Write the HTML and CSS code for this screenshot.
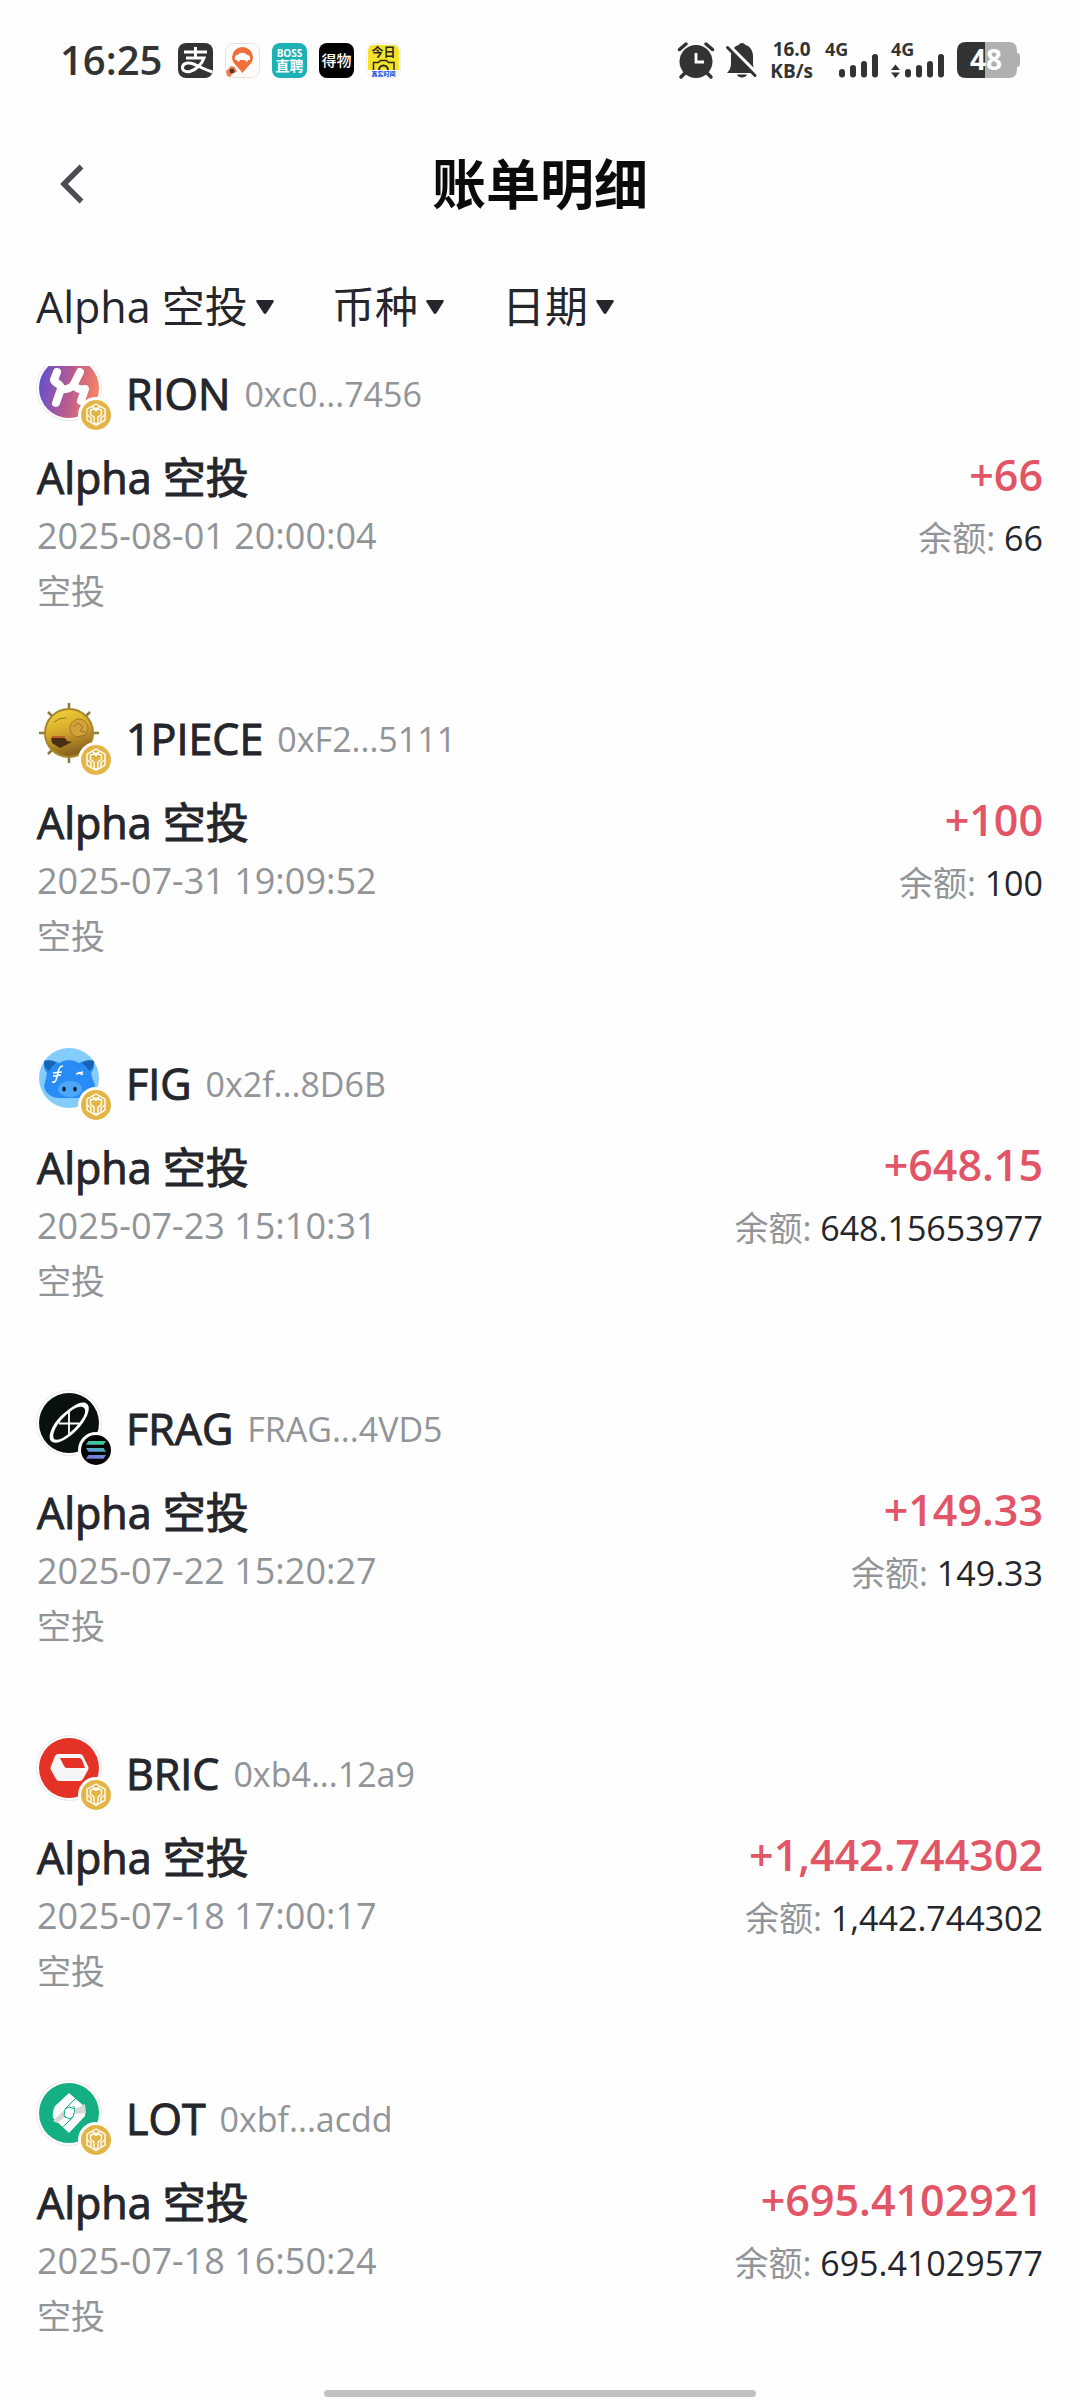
FILE: index.html
```html
<!DOCTYPE html>
<html lang="zh-CN">
<head>
<meta charset="utf-8">
<meta name="viewport" content="width=device-width, initial-scale=1">
<title>账单明细</title>
<link rel="stylesheet" href="styles.css">
</head>
<body>
<svg class="defs" width="0" height="0" aria-hidden="true">
  <defs>
    <linearGradient id="rion" x1="0" y1="0.4" x2="1" y2="0.6">
      <stop offset="0" stop-color="#6350cf"/><stop offset="0.5" stop-color="#b75a91"/><stop offset="1" stop-color="#fa8460"/>
    </linearGradient>
    <linearGradient id="gold" x1="0" y1="0" x2="0.3" y2="1">
      <stop offset="0" stop-color="#f4d93a"/><stop offset="0.5" stop-color="#d9aa2c"/><stop offset="1" stop-color="#8a6420"/>
    </linearGradient>
    <linearGradient id="sol" x1="0" y1="1" x2="0.3" y2="0">
      <stop offset="0" stop-color="#8a6be0"/><stop offset="0.5" stop-color="#5f9fd0"/><stop offset="1" stop-color="#3fc79a"/>
    </linearGradient>
    <symbol id="bnb" viewBox="0 0 36 36">
      <circle cx="18" cy="18" r="18" fill="#fff"/>
      <circle cx="18" cy="18" r="15" fill="#e3b545"/>
      <g fill="none" stroke="#fff" stroke-width="1.400" stroke-linejoin="round">
        <path d="M18 7l9 5.200v11L18 28.500l-9-5.300v-11z"/>
        <path d="M14 9.500l4 2.300 4-2.300M12.500 13l3.500-1 2 1.500 2-1.500 3.500 1v4.500L20 20v6l-2 1.200-2-1.200v-6l-3.500-2.500zM9 18l4 2.500v4.500M27 18l-4 2.500v4.500"/>
      </g>
    </symbol>
    <symbol id="solana" viewBox="0 0 36 36">
      <circle cx="18" cy="18" r="18" fill="#fff"/>
      <circle cx="18" cy="18" r="15" fill="#050507"/>
      <path d="M10.500 9h17.500l-2.500 3.800H8zM8 16h17.500l2.500 3.800H10.500zM10.500 23h17.500l-2.500 3.800H8z" fill="url(#sol)"/>
    </symbol>
  </defs>
</svg>

<header class="status">
  <div class="status-side">
    <time class="clock">16:25</time>
    <svg class="app" viewBox="0 0 35 35" aria-hidden="true"><rect width="35" height="35" rx="8" fill="#333"/>
      <path d="M6 9h23M17.500 4v11M8 15h18c-2 6-8 12-14 13.500-4 1-8-1-7.500-4.500.500-4 6-5 11-3 6 2.500 12 6 19 8" fill="none" stroke="#fff" stroke-width="3"/></svg>
    <svg class="app" viewBox="0 0 35 35" aria-hidden="true"><rect x="0.500" y="0.500" width="34" height="34" rx="8" fill="#fffdfb" stroke="#e6e2e0"/>
      <path d="M17.500 4a10.500 10.500 0 0 1 10.500 10.500c0 6-6 9-10.500 15.500C13 23.500 7 20.500 7 14.500A10.500 10.500 0 0 1 17.500 4z" fill="#f0703c"/>
      <path d="M10 14.500c0-2 1.500-2.500 3-2.500 1.500-3 7-3 9 0 2 0 3 1 3 3v2H10z" fill="#fff"/><circle cx="13.500" cy="17" r="1.500" fill="#fff"/><circle cx="21.500" cy="17" r="1.500" fill="#fff"/>
      <path d="M1 28l5-5 4 1 2 5-4 1-3 4-3-1z" fill="#ef8050"/><circle cx="7" cy="28" r="2.500" fill="#5c3326"/></svg>
    <svg class="app" viewBox="0 0 35 35" aria-hidden="true"><rect width="35" height="35" rx="8" fill="#1db0b4"/>
      <text class="t-boss" x="17.500" y="14" text-anchor="middle">BOSS</text><text class="t-zhipin" x="17.500" y="28" text-anchor="middle">直聘</text></svg>
    <svg class="app" viewBox="0 0 35 35" aria-hidden="true"><rect width="35" height="35" rx="8" fill="#000"/>
      <text class="t-dewu" x="17.500" y="23" text-anchor="middle">得物</text></svg>
    <svg class="app" viewBox="0 0 35 35" aria-hidden="true"><rect x="0.500" y="0.500" width="34" height="34" rx="8" fill="#fff" stroke="#eee"/><path d="M2 8q0-6 6-6h19q6 0 6 6v19H2z" fill="#f4e22c"/>
      <text class="t-jinri" x="17.500" y="14" text-anchor="middle">今日</text>
      <path d="M7.500 27v-7.500h5l2-2h6l2 2h5.500V27" fill="none" stroke="#2a2a20" stroke-width="1.500"/><path d="M13 27a4.500 4.500 0 0 1 9 0" fill="none" stroke="#2a2a20" stroke-width="2"/>
      <text class="t-zhenshi" x="17.500" y="33" text-anchor="middle">真实时间</text></svg>
  </div>
  <div class="status-side">
    <svg class="alarm" viewBox="0 0 36 36" aria-label="闹钟"><circle cx="18" cy="19.500" r="16.500" fill="#333"/><path d="M18 11v9h8" fill="none" stroke="#fff" stroke-width="2.800"/><path d="M1.500 7.500L8 2M34.500 7.500L28 2" stroke="#333" stroke-width="3.500" stroke-linecap="round"/><path d="M7 31l-4 4M29 31l4 4" stroke="#333" stroke-width="3.500" stroke-linecap="round"/></svg>
    <svg class="bell" viewBox="0 0 32 36" aria-label="静音"><path d="M1 31c3-3 4-6 4-10v-7C5 8 9 4 12.500 3a4 4 0 0 1 7 0C24 4 27 9 27 14v7c0 4 1 7 4 10zM11 32.500h10c-1 4-9 4-10 0z" fill="#333"/><path d="M3 3.500l28 28" stroke="#fff" stroke-width="3.500"/><path d="M1.500 5.500L29 33.500" stroke="#333" stroke-width="3" stroke-linecap="round"/></svg>
    <div class="speed"><span>16.0</span><span>KB/s</span></div>
    <svg class="signal" viewBox="0 0 54 36"><text class="t-net" x="0" y="14">4G</text><path d="M17 30v2.500M28 26v6.500M39 22v10.500M50 15v17.500" stroke="#333" stroke-width="6" stroke-linecap="round"/></svg>
    <svg class="signal" viewBox="0 0 54 36"><text class="t-net" x="0" y="14">4G</text><path d="M0 28l4.500-5.500L9 28zM0 30.500l4.500 5.500L9 30.500z" fill="#333"/><path d="M17 30v2.500M28 26v6.500M39 22v10.500M50 15v17.500" stroke="#333" stroke-width="6" stroke-linecap="round"/></svg>
    <svg class="battery" viewBox="0 0 63 36"><path d="M28 0h24q8 0 8 9v2q3 0 3 3v8q0 3-3 3v2q0 9-8 9H28z" fill="#b0b0b0"/><path d="M28 0H9Q0 0 0 9v18q0 9 9 9h19z" fill="#333"/><text class="t-batt" x="29" y="28" text-anchor="middle">48</text></svg>
  </div>
</header>

<nav class="topbar">
  <button class="back" type="button" aria-label="返回"><svg viewBox="0 0 24 40"><path d="M21.500 2.500L4 20l17.500 17.500" fill="none" stroke="#4b4d52" stroke-width="5.500"/></svg></button>
  <h1 class="title">账单明细</h1>
</nav>

<form class="filters">
  <label class="filter"><select aria-label="类型"><option>Alpha 空投</option></select><svg viewBox="0 0 18 14"><path d="M1.500 0h15q2 0 1 2l-7 11q-1.500 2-3 0L.500 2q-1-2 1-2z"/></svg></label>
  <label class="filter"><select aria-label="币种"><option>币种</option></select><svg viewBox="0 0 18 14"><path d="M1.500 0h15q2 0 1 2l-7 11q-1.500 2-3 0L.500 2q-1-2 1-2z"/></svg></label>
  <label class="filter"><select aria-label="日期"><option>日期</option></select><svg viewBox="0 0 18 14"><path d="M1.500 0h15q2 0 1 2l-7 11q-1.500 2-3 0L.500 2q-1-2 1-2z"/></svg></label>
</form>

<main class="list">
  <article class="entry">
    <div class="token">
      <div class="logo"><svg viewBox="0 0 60 60"><circle cx="30" cy="30" r="30" fill="url(#rion)"/><path d="M18 14l-3 8c0 3 8 4 7 9l-5 14M41 14l-5 10c-2 5-7 8-14 7M35 26c2 5 5 6 11 5l-4 12" fill="none" stroke="#fff" stroke-width="8" stroke-linecap="round" stroke-linejoin="round"/></svg><svg class="chain"><use href="#bnb"/></svg></div>
      <h2 class="name">RION</h2><span class="address">0xc0...7456</span>
    </div>
    <div class="detail">
      <div class="info"><p class="kind">Alpha 空投</p><time class="date">2025-08-01 20:00:04</time><p class="note">空投</p></div>
      <div class="sums"><p class="amount">+66</p><p class="balance">余额: <b>66</b></p></div>
    </div>
  </article>
  <article class="entry">
    <div class="token">
      <div class="logo bare"><svg viewBox="0 0 60 60"><g stroke="#8b7b3c" stroke-width="2.500"><path d="M30 0v60M0 30h60M9 9l42 42M51 9L9 51"/></g><circle cx="30" cy="30" r="24" fill="url(#gold)" stroke="#a9862c" stroke-width="2"/><path d="M12 35h14l2 3 5 1-12 6-8-5z" fill="#4a3012"/><circle cx="40" cy="25" r="9" fill="#d2a238" stroke="#a07a28" stroke-width="1"/><path d="M34 24l5-4 5 4-3 4 6 1M37 34l9-2M15 19q6-5 12-4" fill="none" stroke="#9a7526" stroke-width="1"/><path d="M13 34h13" stroke="#b5502e" stroke-width="1.500"/></svg><svg class="chain"><use href="#bnb"/></svg></div>
      <h2 class="name">1PIECE</h2><span class="address">0xF2...5111</span>
    </div>
    <div class="detail">
      <div class="info"><p class="kind">Alpha 空投</p><time class="date">2025-07-31 19:09:52</time><p class="note">空投</p></div>
      <div class="sums"><p class="amount">+100</p><p class="balance">余额: <b>100</b></p></div>
    </div>
  </article>
  <article class="entry">
    <div class="token">
      <div class="logo bare"><svg viewBox="0 0 60 60"><circle cx="30" cy="30" r="30" fill="#84ccfb"/><path d="M5 13q8-2 15 2 10-6 20 0 7-4 15-2 1 8-3 12 1 5 4 12-3 12-16 13H20Q7 49 5 38q2-8 3-13-4-4-3-12z" fill="#288cf6"/><path d="M5 13q8-2 12 2-4 3-7 8-5-3-5-10zM55 13q-8-2-12 2 4 3 7 8 5-3 5-10z" fill="#1763b4"/><ellipse cx="31" cy="41" rx="12" ry="8" fill="#4ea6f8"/><ellipse cx="25" cy="41" rx="1.800" ry="2.500" fill="#0a2440"/><ellipse cx="36" cy="41" rx="1.800" ry="2.500" fill="#0a2440"/><path d="M24 18q-4 0-5 7l-2 7q-1 3-4 2M14 25l9-1M14 28l8-1M37 26l7-2M39 24q3 3 5 2" fill="none" stroke="#fff" stroke-width="1.500"/></svg><svg class="chain"><use href="#bnb"/></svg></div>
      <h2 class="name">FIG</h2><span class="address">0x2f...8D6B</span>
    </div>
    <div class="detail">
      <div class="info"><p class="kind">Alpha 空投</p><time class="date">2025-07-23 15:10:31</time><p class="note">空投</p></div>
      <div class="sums"><p class="amount">+648.15</p><p class="balance">余额: <b>648.15653977</b></p></div>
    </div>
  </article>
  <article class="entry">
    <div class="token">
      <div class="logo"><svg viewBox="0 0 60 60"><circle cx="30" cy="30" r="30" fill="#08110f"/><path fill-rule="evenodd" d="M48 11c5 4-1 17-10 26s-21 16-26 11c-4-5 2-18 11-26s20-16 25-11zM45 15c-4-4-13 2-20 9S12 41 15 46c4 3 13-3 20-10s14-17 10-21z" fill="#fff"/><path d="M30 18v24M20 30.500h20" stroke="#fff" stroke-width="1.800"/></svg><svg class="chain"><use href="#solana"/></svg></div>
      <h2 class="name">FRAG</h2><span class="address">FRAG...4VD5</span>
    </div>
    <div class="detail">
      <div class="info"><p class="kind">Alpha 空投</p><time class="date">2025-07-22 15:20:27</time><p class="note">空投</p></div>
      <div class="sums"><p class="amount">+149.33</p><p class="balance">余额: <b>149.33</b></p></div>
    </div>
  </article>
  <article class="entry">
    <div class="token">
      <div class="logo"><svg viewBox="0 0 60 60"><circle cx="30" cy="30" r="30" fill="#e53226"/><path d="M19 16h22q2 0 3 2l5 10q1 2 0 4l-5 9q-1 2-3 2H20q-2 0-3-2l-5-9q-1-2 0-4l4-10q1-2 3-2z" fill="#f7f5f5"/><path d="M21 20h19q2 0 3 2l3 8H28q-2 0-3-2z" fill="#e53226"/></svg><svg class="chain"><use href="#bnb"/></svg></div>
      <h2 class="name">BRIC</h2><span class="address">0xb4...12a9</span>
    </div>
    <div class="detail">
      <div class="info"><p class="kind">Alpha 空投</p><time class="date">2025-07-18 17:00:17</time><p class="note">空投</p></div>
      <div class="sums"><p class="amount">+1,442.744302</p><p class="balance">余额: <b>1,442.744302</b></p></div>
    </div>
  </article>
  <article class="entry">
    <div class="token">
      <div class="logo"><svg viewBox="0 0 60 60"><circle cx="30" cy="30" r="30" fill="#14b083"/><path d="M30 10l15 13q2 5 1 10L30 50 14 35q-1-6 2-12z" fill="#fbfdfc"/><path d="M46 21l1 9-12 1 2-5zM14 38l11-11 1 7-8 6z" fill="#d5d9d8"/><path d="M37 15L26 26l-1 7 2 2M23 45l11-11 2-8-2-3M26 26l4-2 6 2M25 33l5 3 4-2" fill="none" stroke="#14b083" stroke-width="1"/></svg><svg class="chain"><use href="#bnb"/></svg></div>
      <h2 class="name">LOT</h2><span class="address">0xbf...acdd</span>
    </div>
    <div class="detail">
      <div class="info"><p class="kind">Alpha 空投</p><time class="date">2025-07-18 16:50:24</time><p class="note">空投</p></div>
      <div class="sums"><p class="amount">+695.4102921</p><p class="balance">余额: <b>695.41029577</b></p></div>
    </div>
  </article>
</main>
<div class="home"></div>
</body>
</html>
```

FILE: styles.css
```css
* { box-sizing: border-box; margin: 0; padding: 0; }

body {
  display: flex;
  flex-direction: column;
  min-height: 100vh;
  background: #fefefe;
  color: #24262b;
  font-family: "Open Sans", "Noto Sans CJK SC", sans-serif;
  font-size: 34px;
}

svg { display: block; flex: none; overflow: visible; }
.defs { position: absolute; }

/* system status bar */
.status {
  display: flex;
  justify-content: space-between;
  align-items: center;
  height: 120px;
  padding: 0 60px;
  color: #333;
}
.status-side { display: flex; align-items: center; gap: 12px; }
.clock { font-size: 40px; font-weight: 600; line-height: 48px; margin-right: 4px; }
.app { width: 35px; height: 35px; }
.alarm { width: 36px; height: 36px; }
.bell { width: 32px; height: 36px; }
.speed {
  display: flex;
  flex-direction: column;
  align-items: center;
  font-size: 19px;
  font-weight: 700;
  line-height: 22px;
}
.signal { width: 54px; height: 36px; }
.battery { width: 63px; height: 36px; }
.t-boss { font-size: 10px; font-weight: 700; fill: #fff; }
.t-zhipin { font-size: 14px; font-weight: 700; fill: #fff; }
.t-dewu { font-size: 15px; font-weight: 500; fill: #fff; }
.t-jinri { font-size: 12px; font-weight: 700; fill: #2a2a20; }
.t-zhenshi { font-size: 6px; font-weight: 900; fill: #2457d8; }
.t-net { font-size: 18px; font-weight: 700; fill: #333; }
.t-batt { font-size: 28px; font-weight: 700; fill: #fff; }

/* page heading */
.topbar {
  display: grid;
  grid-template-columns: 1fr auto 1fr;
  align-items: center;
  height: 128px;
  padding: 0 60px;
}
.back { justify-self: start; border: 0; background: none; }
.back svg { width: 24px; height: 40px; }
.title { font-size: 54px; font-weight: 700; line-height: 72px; color: #0b0b0c; }

/* drop-down filters stay above the scrolled entries */
.filters {
  position: sticky;
  top: 0;
  z-index: 1;
  display: flex;
  gap: 58px;
  height: 118px;
  padding: 28px 36px;
  background: #fefefe;
}
.filter { display: flex; align-items: center; gap: 8px; height: 62px; }
.filter select {
  appearance: none;
  border: 0;
  background: none;
  color: inherit;
  font: inherit;
  font-size: 43px;
  line-height: 60px;
}
.filter svg { width: 18px; height: 14px; fill: #24262b; }

/* entries: the first one is scrolled slightly under the filters */
.list { margin-top: -8px; padding: 0 37px; }
.entry { padding-bottom: 85px; }
.entry:last-child { padding-bottom: 0; }

.token { display: flex; align-items: center; height: 72px; }
.logo {
  position: relative;
  align-self: flex-start;
  width: 60px;
  height: 60px;
  margin: 0 27px 0 2px;
  border-radius: 50%;
  box-shadow: 0 0 0 2px #fff, 0 0 0 3px #e9e9ec;
}
.logo.bare { box-shadow: none; }
.chain { position: absolute; left: 39px; top: 39px; width: 36px; height: 36px; }
.name,
.kind { font-size: 43px; font-weight: 400; line-height: 60px; -webkit-text-stroke: 1px currentColor; }
.name { margin-right: 14px; }
.address { line-height: 60px; color: #919498; }

.detail { display: flex; justify-content: space-between; padding-top: 18px; }
.info { display: flex; flex-direction: column; }
.date { font-size: 36px; line-height: 56px; color: #919498; }
.note { line-height: 54px; color: #919498; }
.sums { text-align: right; }
.amount { font-size: 43px; font-weight: 600; line-height: 54px; color: #e25567; }
.balance { line-height: 72px; color: #919498; }
.balance b { font-weight: 400; color: #24262b; }

/* gesture bar */
.home {
  width: 40%;
  height: 7px;
  margin: auto auto 3px;
  border-radius: 4px;
  background: #c2c2c2;
}
```
